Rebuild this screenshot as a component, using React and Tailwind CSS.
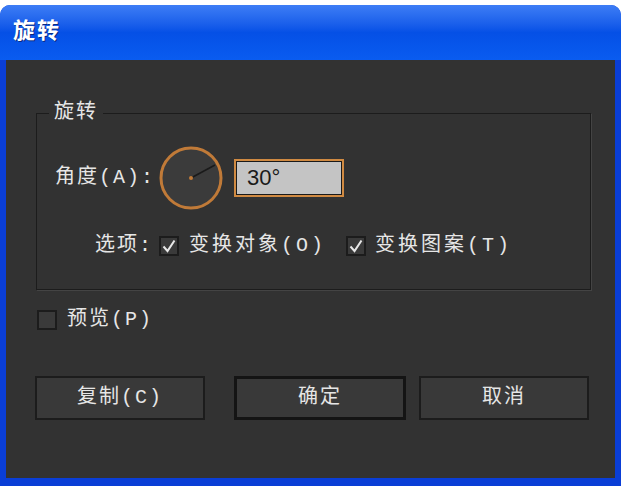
import { useState } from 'react';

const font = { fontFamily: '"Liberation Mono", "Noto Sans CJK SC", monospace' };

const Check = ({ checked }) => (
  <span className="flex items-center justify-center w-[20px] h-[20px] bg-[#3a3a3a] border-2 border-[#1c1c1c] shrink-0">
    {checked && (
      <svg width="16" height="16" viewBox="0 0 16 16">
        <path d="M2.5 8.5 L6.5 13 L13.5 2.5" fill="none" stroke="#e8e8e8" strokeWidth="2" />
      </svg>
    )}
  </span>
);

const Button = ({ children, primary }) => (
  <button
    className={
      'h-[44px] bg-[#393939] text-[#e6e6e6] text-[20px] tracking-[2px] ' +
      (primary ? 'w-[172px] border-[3px] border-[#141414]' : 'w-[170px] border-2 border-[#1c1c1c]')
    }
    style={font}
  >
    {children}
  </button>
);

const Dial = () => (
  <svg width="64" height="66" viewBox="0 0 64 66">
    <circle cx="32" cy="33" r="30" fill="#3b3b3b" stroke="#c07a38" strokeWidth="3" />
    <line x1="32" y1="33" x2="56" y2="20" stroke="#1a1a1a" strokeWidth="1.6" />
    <circle cx="32" cy="33" r="2" fill="#c07a38" />
  </svg>
);

const App = () => {
  const [preview] = useState(false);

  return (
    <div className="w-[625px] h-[486px] bg-white pt-[5px]" style={font}>
      <div className="w-[621px] h-[481px] flex flex-col rounded-t-[10px] overflow-hidden bg-[#0a3ed6]">
        <div className="h-[55px] shrink-0 flex items-center px-[13px] bg-gradient-to-b from-[#3d7df5] via-[#0550e6] to-[#0a5cf0]">
          <span className="text-white text-[22px] font-bold tracking-[2px] [text-shadow:1px_1px_0_#0a2a80]">旋转</span>
        </div>
        <div className="flex-1 mx-[6px] mb-[8px] bg-[#323232] text-[#e6e6e6] text-[20px] tracking-[2px] flex flex-col">
          <div className="relative mt-[53px] ml-[30px] mr-[24px] h-[177px] border border-[#1c1c1c] shadow-[1px_1px_0_#444] pl-[18px] pt-[31px]">
            <span className="absolute left-[12px] top-[-13px] px-[5px] leading-[24px] bg-[#323232]">旋转</span>
            <div className="flex items-center">
              <span>角度(A):</span>
              <span className="ml-[4px]"><Dial /></span>
              <span className="ml-[11px] w-[110px] h-[38px] border-2 border-[#d08a42] p-[1px] bg-[#1a1a1a]">
                <span
                  className="flex items-center h-full bg-[#c4c4c4] text-[#1a1a1a] pl-[10px] text-[22px] tracking-normal leading-none"
                  style={{ fontFamily: '"Liberation Sans", sans-serif' }}
                >
                  30°
                </span>
              </span>
            </div>
            <div className="flex items-center mt-[20px] ml-[40px]">
              <span>选项:</span>
              <span className="ml-[6px]"><Check checked /></span>
              <span className="ml-[10px] tracking-[3px]">变换对象(O)</span>
              <span className="ml-[20px]"><Check checked /></span>
              <span className="ml-[9px] tracking-[3px]">变换图案(T)</span>
            </div>
          </div>
          <div className="flex items-center mt-[15px] ml-[31px]">
            <Check checked={preview} />
            <span className="ml-[10px]">预览(P)</span>
          </div>
          <div className="flex items-center mt-[41px] ml-[29px]">
            <Button>复制(C)</Button>
            <span className="ml-[29px]"><Button primary>确定</Button></span>
            <span className="ml-[13px]"><Button>取消</Button></span>
          </div>
        </div>
      </div>
    </div>
  );
};

export default App;
